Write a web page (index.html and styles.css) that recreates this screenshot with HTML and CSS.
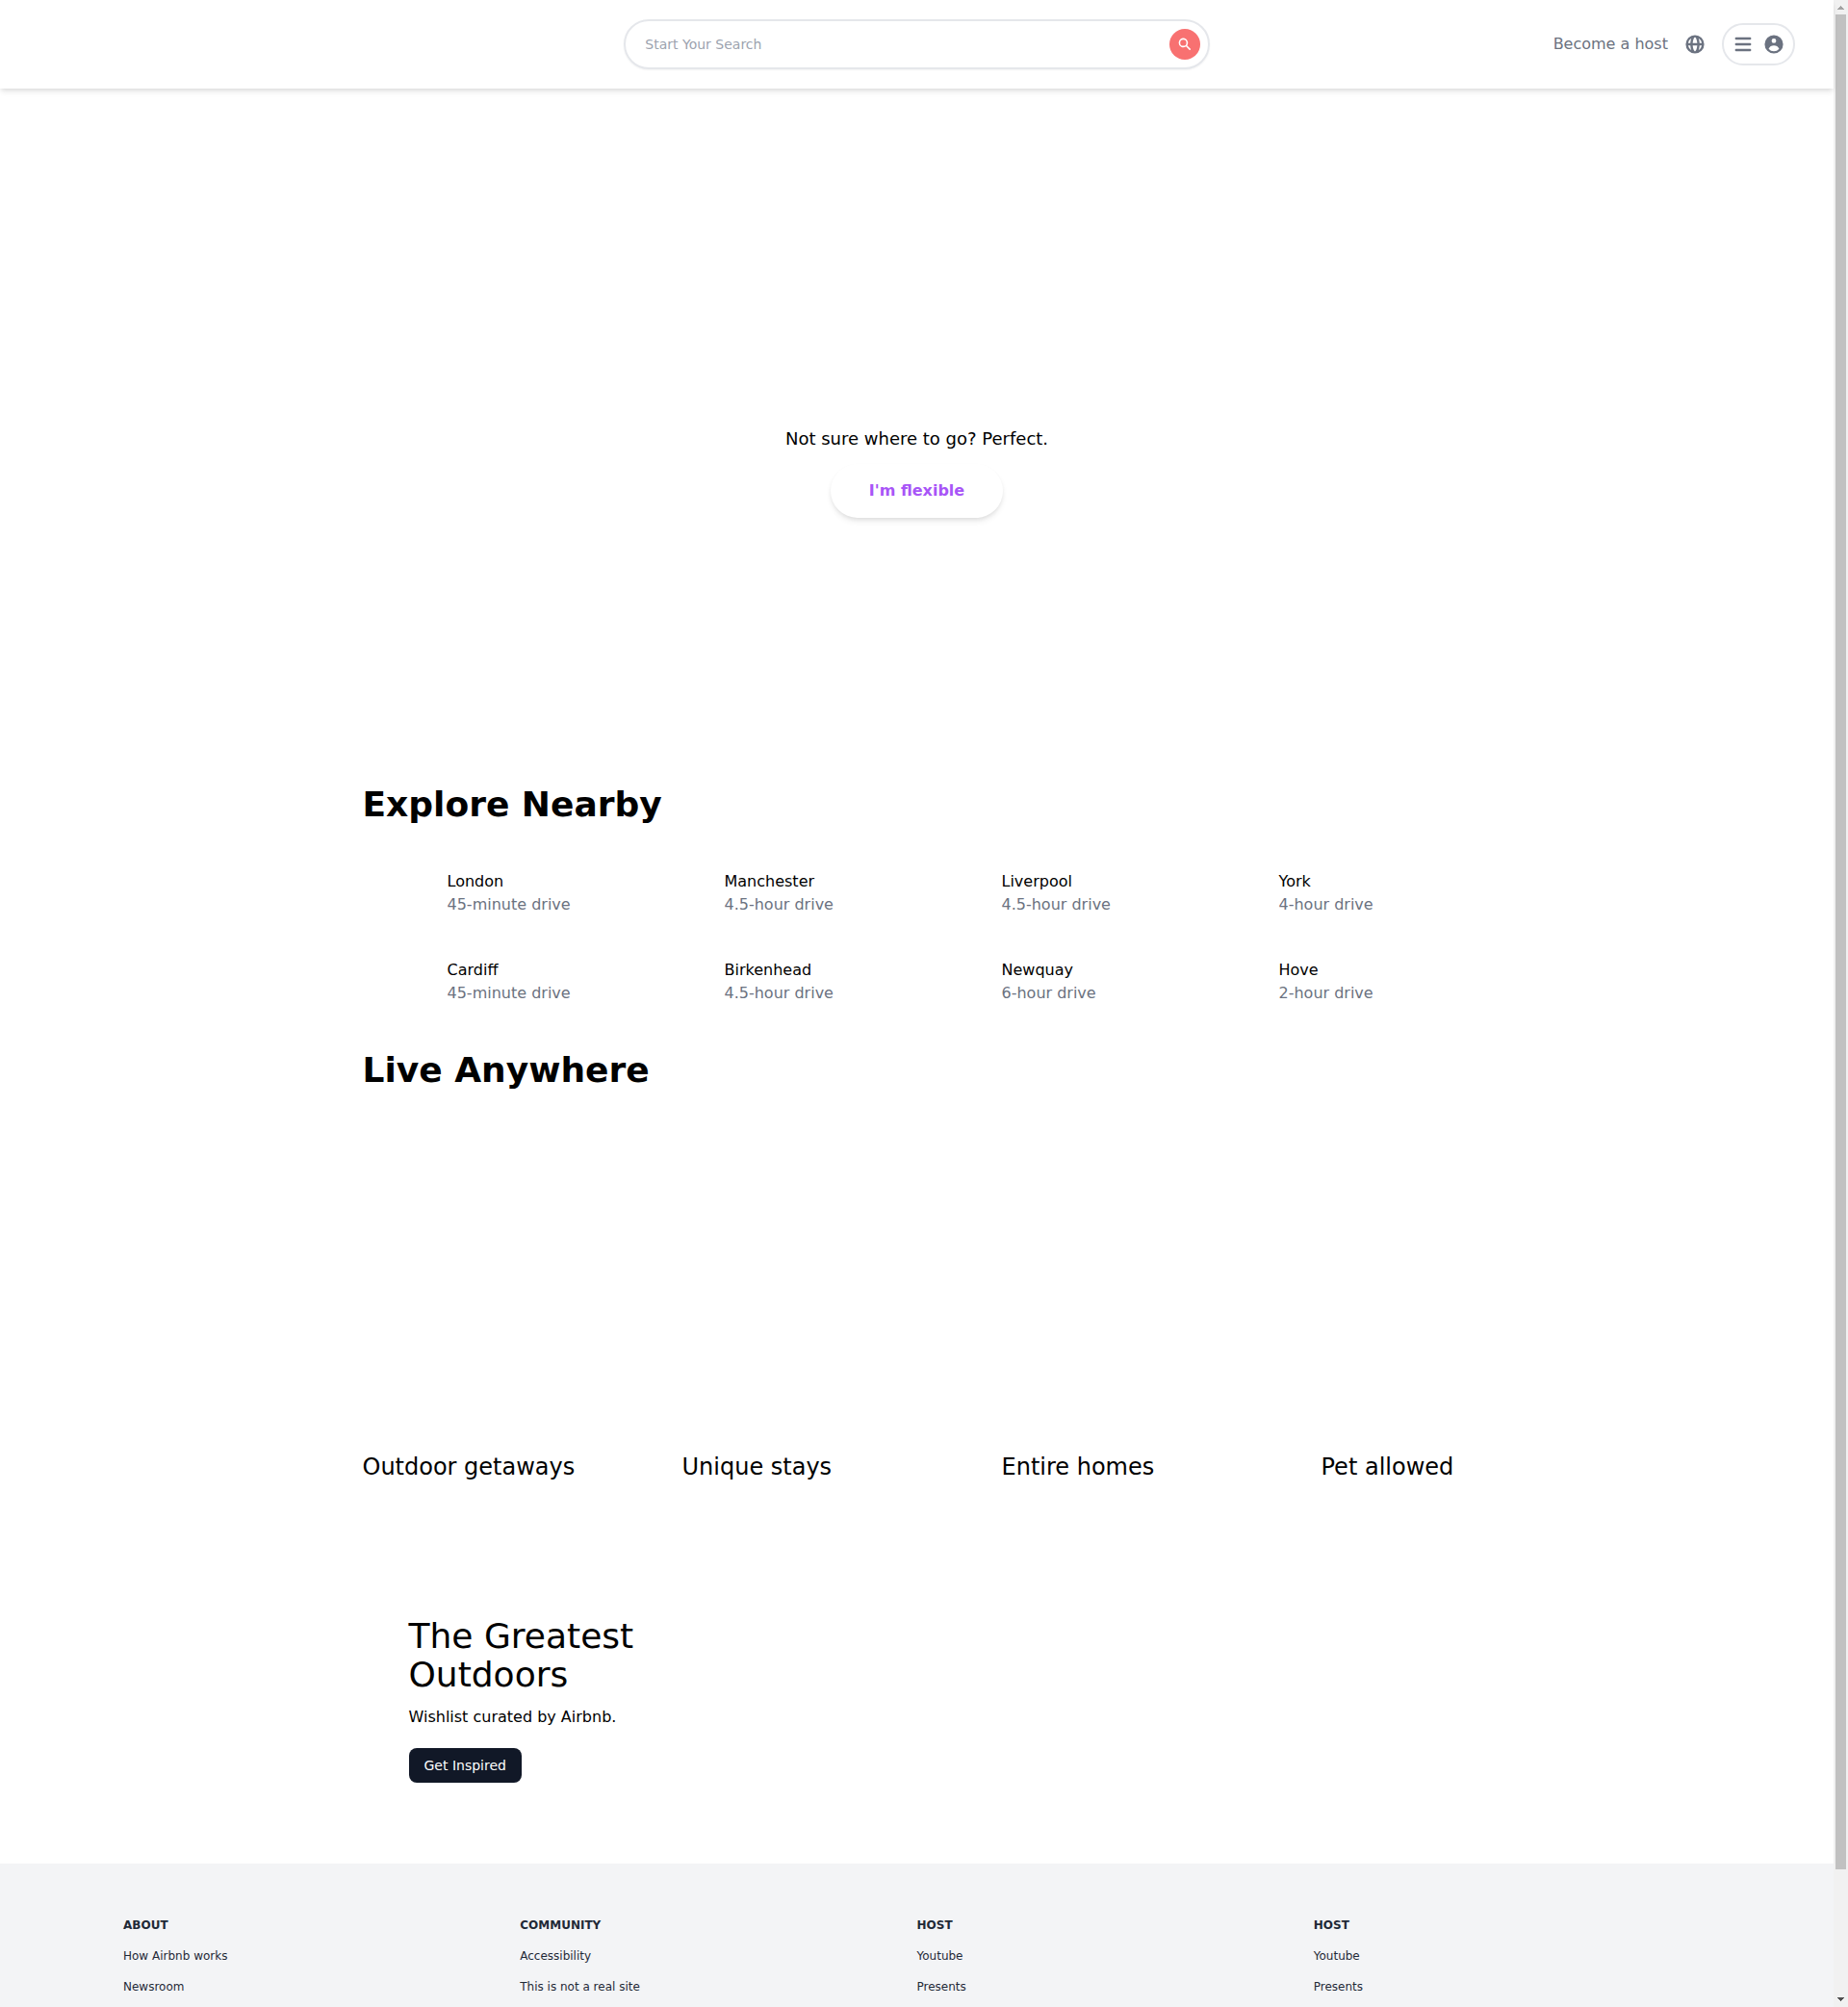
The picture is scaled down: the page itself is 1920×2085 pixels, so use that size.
FILE: index.html
```html
<!DOCTYPE html>
<html lang="en">
<head>
<meta charset="utf-8">
<title>Airbnb</title>
<link rel="stylesheet" href="styles.css">
</head>
<body>
<div class="page">
  <header class="header">
    <div></div>
    <div class="search">
      <input class="search-input" type="text" placeholder="Start Your Search">
      <svg class="search-icon" viewBox="0 0 20 20" fill="currentColor"><path fill-rule="evenodd" clip-rule="evenodd" d="M8 4a4 4 0 100 8 4 4 0 000-8zM2 8a6 6 0 1110.89 3.476l4.817 4.817a1 1 0 01-1.414 1.414l-4.816-4.816A6 6 0 012 8z"/></svg>
    </div>
    <div class="actions">
      <p>Become a host</p>
      <svg class="icon" viewBox="0 0 20 20" fill="currentColor"><path fill-rule="evenodd" clip-rule="evenodd" d="M4.083 9h1.946c.089-1.546.383-2.97.837-4.118A6.004 6.004 0 004.083 9zM10 2a8 8 0 100 16 8 8 0 000-16zm0 2c-.076 0-.232.032-.465.262-.238.234-.497.623-.737 1.182-.389.907-.673 2.142-.766 3.556h3.936c-.093-1.414-.377-2.649-.766-3.556-.24-.56-.5-.948-.737-1.182C10.232 4.032 10.076 4 10 4zm3.971 5c-.089-1.546-.383-2.97-.837-4.118A6.004 6.004 0 0115.917 9h-1.946zm-2.003 2H8.032c.093 1.414.377 2.649.766 3.556.24.56.5.948.737 1.182.233.23.389.262.465.262.076 0 .232-.032.465-.262.238-.234.498-.623.737-1.182.389-.907.673-2.142.766-3.556zm1.166 4.118c.454-1.147.748-2.572.837-4.118h1.946a6.004 6.004 0 01-2.783 4.118zm-6.268 0C6.412 13.97 6.118 12.546 6.03 11H4.083a6.004 6.004 0 002.783 4.118z"/></svg>
      <div class="profile">
        <svg class="icon" viewBox="0 0 20 20" fill="currentColor"><path fill-rule="evenodd" clip-rule="evenodd" d="M3 5a1 1 0 011-1h12a1 1 0 110 2H4a1 1 0 01-1-1zM3 10a1 1 0 011-1h12a1 1 0 110 2H4a1 1 0 01-1-1zM3 15a1 1 0 011-1h12a1 1 0 110 2H4a1 1 0 01-1-1z"/></svg>
        <svg class="icon" viewBox="0 0 20 20" fill="currentColor"><path fill-rule="evenodd" clip-rule="evenodd" d="M18 10a8 8 0 11-16 0 8 8 0 0116 0zm-6-3a2 2 0 11-4 0 2 2 0 014 0zm-2 4a5 5 0 00-4.546 2.916A5.986 5.986 0 0010 16a5.986 5.986 0 004.546-2.084A5 5 0 0010 11z"/></svg>
      </div>
    </div>
  </header>

  <section class="banner">
    <p class="banner-text">Not sure where to go? Perfect.</p>
    <button class="banner-button">I'm flexible</button>
  </section>

  <main class="main">
    <section class="explore">
      <h2>Explore Nearby</h2>
      <div class="cities">
        <div class="city"><h3>London</h3><p>45-minute drive</p></div>
        <div class="city"><h3>Manchester</h3><p>4.5-hour drive</p></div>
        <div class="city"><h3>Liverpool</h3><p>4.5-hour drive</p></div>
        <div class="city"><h3>York</h3><p>4-hour drive</p></div>
        <div class="city"><h3>Cardiff</h3><p>45-minute drive</p></div>
        <div class="city"><h3>Birkenhead</h3><p>4.5-hour drive</p></div>
        <div class="city"><h3>Newquay</h3><p>6-hour drive</p></div>
        <div class="city"><h3>Hove</h3><p>2-hour drive</p></div>
      </div>
    </section>
    <section class="live">
      <h2>Live Anywhere</h2>
      <div class="stays">
        <h3 class="stay">Outdoor getaways</h3>
        <h3 class="stay">Unique stays</h3>
        <h3 class="stay">Entire homes</h3>
        <h3 class="stay">Pet allowed</h3>
      </div>
    </section>
    <section class="outdoors">
      <h3>The Greatest Outdoors</h3>
      <p>Wishlist curated by Airbnb.</p>
      <button class="inspire">Get Inspired</button>
    </section>
  </main>

  <footer class="footer">
    <div class="links"><h5>ABOUT</h5><p>How Airbnb works</p><p>Newsroom</p></div>
    <div class="links"><h5>COMMUNITY</h5><p>Accessibility</p><p>This is not a real site</p></div>
    <div class="links"><h5>HOST</h5><p>Youtube</p><p>Presents</p></div>
    <div class="links"><h5>HOST</h5><p>Youtube</p><p>Presents</p></div>
  </footer>
</div>
<div class="scrollbar">
  <svg class="arrow" viewBox="0 0 15 15" shape-rendering="crispEdges"><path fill="#a3a3a3" d="M7 6h1v1h1v1h1v1h1v1H4V9h1V8h1V7h1z"/></svg>
  <div class="thumb"></div>
  <svg class="arrow" viewBox="0 0 15 15" shape-rendering="crispEdges"><path fill="#505050" d="M4 5h7v1h-1v1H9v1H8v1H7V8H6V7H5V6H4z"/></svg>
</div>
</body>
</html>
```

FILE: styles.css
```css
* { box-sizing: border-box; margin: 0; padding: 0; }

body {
  display: flex;
  height: 2085px;
  overflow: hidden;
  background: #fff;
  color: #000;
  font: 16px/24px "DejaVu Sans", sans-serif;
}

h2, h3 { font-weight: 400; }
button, input { font-family: inherit; border: none; outline: none; }
svg { display: block; flex-shrink: 0; }

.page { flex: 1; min-width: 0; }

.header {
  position: relative;
  display: grid;
  grid-template-columns: repeat(3, minmax(0, 1fr));
  align-items: center;
  height: 92px;
  padding: 20px 40px;
  background: #fff;
  box-shadow: 0 4px 6px -1px rgba(0, 0, 0, .1), 0 2px 4px -1px rgba(0, 0, 0, .06);
}
.search {
  display: flex;
  align-items: center;
  height: 52px;
  border: 2px solid #e5e7eb;
  border-radius: 26px;
  box-shadow: 0 1px 2px rgba(0, 0, 0, .05);
}
.search-input {
  flex: 1;
  padding-left: 20px;
  background: transparent;
  font-size: 14px;
  line-height: 20px;
}
.search-input::placeholder { color: #9ca3af; }
.search-icon {
  width: 32px;
  height: 32px;
  margin: 0 8px;
  padding: 8px;
  border-radius: 50%;
  background: #f87171;
  color: #fff;
}
.actions {
  display: flex;
  align-items: center;
  justify-content: flex-end;
  gap: 16px;
  color: #6b7280;
}
.icon { width: 24px; height: 24px; }
.profile {
  display: flex;
  gap: 8px;
  padding: 8px;
  border: 2px solid #e5e7eb;
  border-radius: 22px;
}

.banner {
  display: flex;
  flex-direction: column;
  align-items: center;
  height: 700px;
  padding-top: 350px;
}
.banner-text { font-size: 18px; line-height: 28px; }
.banner-button {
  margin: 12px 0;
  padding: 16px 40px;
  border-radius: 28px;
  background: #fff;
  color: #a855f7;
  font-size: 16px;
  font-weight: 700;
  line-height: 24px;
  box-shadow: 0 4px 6px -1px rgba(0, 0, 0, .1), 0 2px 4px -1px rgba(0, 0, 0, .06);
}

.main { max-width: 1280px; margin: 0 auto; padding: 0 64px; }
.main h2 { font-size: 36px; line-height: 40px; font-weight: 700; }

.explore { padding-top: 24px; }
.explore h2 { padding-bottom: 20px; }
.cities { display: grid; grid-template-columns: repeat(4, 1fr); }
.city { height: 64px; margin: 20px 8px 8px; padding: 8px 0 8px 80px; }
.city h3 { font-size: 16px; }
.city p { color: #6b7280; }

.live h2 { padding: 32px 0; }
.stays { display: flex; gap: 12px; padding: 12px 0; }
.stay {
  flex: 0 0 320px;
  padding-top: 332px;
  font-size: 24px;
  line-height: 32px;
}

.outdoors { height: 384px; padding: 128px 48px 0; }
.outdoors h3 { width: 256px; margin-bottom: 12px; font-size: 36px; line-height: 40px; }
.inspire {
  margin-top: 20px;
  padding: 8px 16px;
  border-radius: 8px;
  background: #111827;
  color: #fff;
  font-size: 14px;
  line-height: 20px;
}

.footer {
  display: grid;
  grid-template-columns: repeat(4, 1fr);
  padding: 56px 128px;
  background: #f3f4f6;
  color: #1f2937;
  font-size: 12px;
  line-height: 16px;
}
.links { display: flex; flex-direction: column; gap: 16px; }
.links h5 { font-size: 12px; font-weight: 700; }

.scrollbar {
  display: flex;
  flex-direction: column;
  justify-content: space-between;
  width: 15px;
  background: #f1f1f1;
}
.arrow { width: 15px; height: 15px; }
.thumb { height: 1927px; margin: 0 2px auto; background: #c1c1c1; }
```
